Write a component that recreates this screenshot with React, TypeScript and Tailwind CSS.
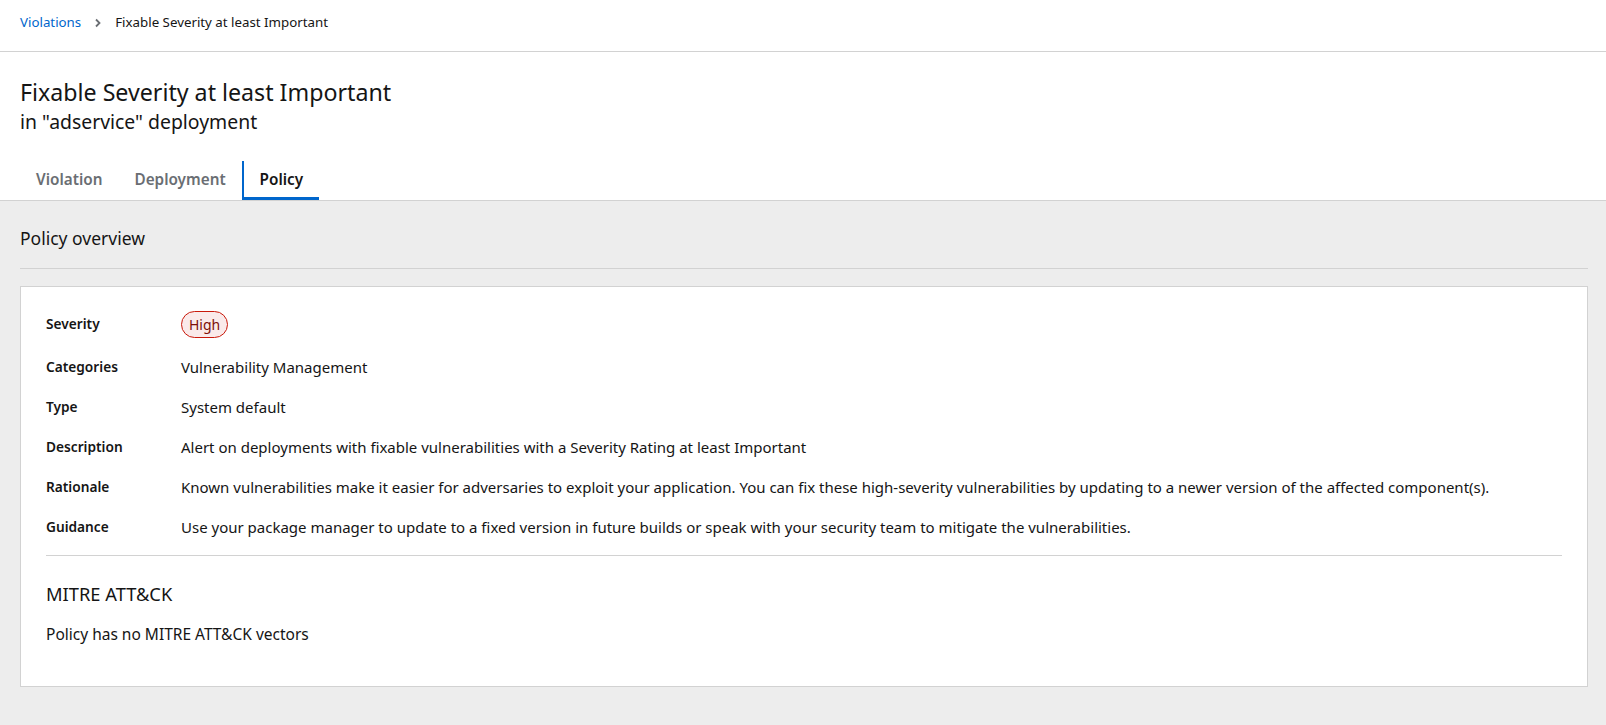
import React from 'react'

const rows: { label: string; value: React.ReactNode; tall?: boolean }[] = [
  {
    label: 'Severity',
    tall: true,
    value: (
      <span className="inline-flex h-[27px] items-center rounded-full border border-[#c9190b] bg-[#faeaea] px-[7px] text-[14px] text-[#7d1007]">
        High
      </span>
    ),
  },
  { label: 'Categories', value: 'Vulnerability Management' },
  { label: 'Type', value: 'System default' },
  {
    label: 'Description',
    value: 'Alert on deployments with fixable vulnerabilities with a Severity Rating at least Important',
  },
  {
    label: 'Rationale',
    value:
      'Known vulnerabilities make it easier for adversaries to exploit your application. You can fix these high-severity vulnerabilities by updating to a newer version of the affected component(s).',
  },
  {
    label: 'Guidance',
    value:
      'Use your package manager to update to a fixed version in future builds or speak with your security team to mitigate the vulnerabilities.',
  },
]

export default function App() {
  return (
    <div className="flex min-h-[725px] flex-col bg-[#ededed] font-['Noto_Sans',sans-serif] text-[#151515]">
      <div className="bg-white">
        <nav className="flex h-[52px] items-center gap-[13px] border-b border-[#d2d2d2] px-5 pb-[5px] text-[13.3px]">
          <a className="text-[#0066cc]">Violations</a>
          <svg width="8" height="10" viewBox="0 0 8 10" className="text-[#6a6e73]">
            <path d="M2 1.5 L5.5 5 L2 8.5" stroke="currentColor" strokeWidth="1.8" fill="none" />
          </svg>
          <span>Fixable Severity at least Important</span>
        </nav>
        <div className="px-5 pt-[25px] pb-[25px]">
          <h1 className="text-[23.2px] leading-[30px]">Fixable Severity at least Important</h1>
          <p className="text-[19.4px] leading-[29px]">in "adservice" deployment</p>
        </div>
        <div className="flex h-[40px] border-b border-[#d2d2d2] px-5 text-[15.3px] font-semibold">
          <button className="border-b-[3px] border-transparent px-4 text-[#6a6e73]">Violation</button>
          <button className="border-b-[3px] border-transparent px-4 text-[#6a6e73]">Deployment</button>
          <button className="border-b-[3px] border-l-2 border-[#0066cc] px-4 text-[#151515]">Policy</button>
        </div>
      </div>

      <div className="pt-[25px] pr-[18px] pl-5">
        <h2 className="border-b border-[#d2d2d2] pb-[18px] text-[17.5px] leading-[24px]">Policy overview</h2>
        <div className="mt-[17px] border border-[#d2d2d2] bg-white px-[25px] pt-[14px] pb-[40px]">
          <dl className="flex flex-col border-b border-[#d2d2d2] pb-[8px]">
            {rows.map((r) => (
              <div key={r.label} className={`flex items-center ${r.tall ? 'h-[46px]' : 'h-[40px]'}`}>
                <dt className="w-[135px] shrink-0 text-[13.7px] font-semibold">{r.label}</dt>
                <dd className="text-[15px]">{r.value}</dd>
              </div>
            ))}
          </dl>
          <h3 className="pt-[26px] text-[18.3px] leading-[24px]">MITRE ATT&amp;CK</h3>
          <p className="mt-[16px] text-[15.5px] leading-[24px]">Policy has no MITRE ATT&amp;CK vectors</p>
        </div>
      </div>
    </div>
  )
}
